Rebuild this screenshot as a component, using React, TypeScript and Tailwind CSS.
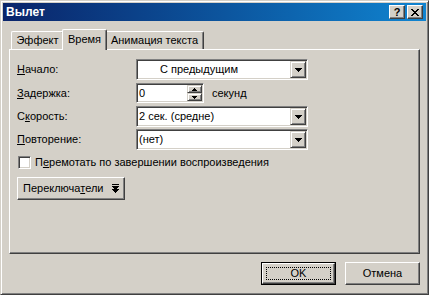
import React from "react";

const font = "font-['Liberation_Sans',Arial,sans-serif]";
const raised =
  "border border-t-white border-l-white border-r-[#404040] border-b-[#404040] shadow-[inset_-1px_-1px_#808080]";
const raisedSoft =
  "border border-t-[#d4d0c8] border-l-[#d4d0c8] border-r-[#404040] border-b-[#404040] shadow-[inset_1px_1px_#ffffff,inset_-1px_-1px_#808080]";
const sunken =
  "border border-t-[#808080] border-l-[#808080] border-r-white border-b-white shadow-[inset_1px_1px_#404040,inset_-1px_-1px_#d4d0c8]";

function DownArrow() {
  return (
    <svg width="7" height="4" viewBox="0 0 7 4" shapeRendering="crispEdges">
      <rect x="0" y="0" width="7" height="1" fill="#000" />
      <rect x="1" y="1" width="5" height="1" fill="#000" />
      <rect x="2" y="2" width="3" height="1" fill="#000" />
      <rect x="3" y="3" width="1" height="1" fill="#000" />
    </svg>
  );
}

function SpinArrow({ up }: { up?: boolean }) {
  return (
    <svg width="5" height="3" viewBox="0 0 5 3" shapeRendering="crispEdges">
      {up ? (
        <>
          <rect x="2" y="0" width="1" height="1" fill="#000" />
          <rect x="1" y="1" width="3" height="1" fill="#000" />
          <rect x="0" y="2" width="5" height="1" fill="#000" />
        </>
      ) : (
        <>
          <rect x="0" y="0" width="5" height="1" fill="#000" />
          <rect x="1" y="1" width="3" height="1" fill="#000" />
          <rect x="2" y="2" width="1" height="1" fill="#000" />
        </>
      )}
    </svg>
  );
}

function Combo({ value, indent }: { value: string; indent?: boolean }) {
  return (
    <div className={`${sunken} w-[172px] h-[21px] bg-white flex items-stretch p-[1px]`}>
      <div className={`flex-1 flex items-center text-[11px] ${indent ? "pl-[22px]" : "pl-[1px]"}`}>
        {value}
      </div>
      <div className={`${raisedSoft} w-[16px] bg-[#d4d0c8] flex items-center justify-center`}>
        <DownArrow />
      </div>
    </div>
  );
}

function Row({ label, children }: { label: React.ReactNode; children: React.ReactNode }) {
  return (
    <div className="flex items-center">
      <div className="w-[119px] text-[11px]">{label}</div>
      {children}
    </div>
  );
}

export default function App() {
  return (
    <div
      className={`${font} w-[429px] h-[295px] bg-[#d4d0c8] text-black border border-t-[#d4d0c8] border-l-[#d4d0c8] border-r-[#404040] border-b-[#404040] shadow-[inset_1px_1px_#ffffff,inset_-1px_-1px_#808080] p-[2px] flex flex-col overflow-hidden`}
    >
      {/* Title bar */}
      <div className="h-[18px] bg-linear-to-r from-[#0a246a] to-[#1084d0] flex items-center justify-between pl-[3px] pr-[3px]">
        <span className="text-white font-bold text-[12px] leading-none">Вылет</span>
        <div className="flex gap-[2px]">
          <div className={`${raised} bg-[#d4d0c8] w-[16px] h-[14px] flex items-center justify-center text-[11px] font-bold leading-none`}>
            ?
          </div>
          <div className={`${raised} bg-[#d4d0c8] w-[16px] h-[14px] flex items-center justify-center`}>
            <svg width="8" height="7" viewBox="0 0 8 7" shapeRendering="crispEdges">
              <path d="M0 0h2v1h-2zM6 0h2v1h-2zM1 1h2v1h-2zM5 1h2v1h-2zM2 2h4v1h-4zM3 3h2v1h-2zM2 4h4v1h-4zM1 5h2v1h-2zM5 5h2v1h-2zM0 6h2v1h-2zM6 6h2v1h-2z" fill="#000" />
            </svg>
          </div>
        </div>
      </div>

      <div className="pl-[6px] flex flex-col">
        {/* Tabs */}
        <div className="mt-[8px] ml-[2px] flex items-end text-[11px]">
          <div className="w-[53px] h-[18px] border-t border-l border-white border-r border-r-[#404040] shadow-[inset_-1px_0_#808080] rounded-tl-[2px] rounded-tr-[2px] flex items-center justify-center">
            Эффект
          </div>
          <div className="relative z-10 -mx-[2px] mb-[-1px] w-[45px] h-[21px] bg-[#d4d0c8] border-t border-l border-white border-r border-r-[#404040] shadow-[inset_-1px_0_#808080] rounded-tl-[2px] rounded-tr-[2px] flex items-center justify-center pb-[2px]">
            Время
          </div>
          <div className="w-[99px] h-[18px] border-t border-l border-white border-r border-r-[#404040] shadow-[inset_-1px_0_#808080] rounded-tl-[2px] rounded-tr-[2px] flex items-center justify-center">
            Анимация текста
          </div>
        </div>

        {/* Panel */}
        <div className={`${raised} w-[411px] h-[205px] flex flex-col pl-[7px] pt-[9px]`}>
          <Row label={<><u>Н</u>ачало:</>}>
            <Combo value="С предыдущим" indent />
          </Row>
          <div className="mt-[3px]">
            <Row label={<><u>З</u>адержка:</>}>
              <div className={`${sunken} w-[68px] h-[20px] bg-white flex items-stretch p-[1px]`}>
                <div className="flex-1 flex items-center text-[11px] pl-[1px]">0</div>
                <div className="w-[15px] flex flex-col">
                  <div className={`${raisedSoft} flex-1 bg-[#d4d0c8] flex items-center justify-center`}>
                    <SpinArrow up />
                  </div>
                  <div className={`${raisedSoft} flex-1 bg-[#d4d0c8] flex items-center justify-center`}>
                    <SpinArrow />
                  </div>
                </div>
              </div>
              <span className="ml-[8px] text-[11px]">секунд</span>
            </Row>
          </div>
          <div className="mt-[3px]">
            <Row label={<>С<u>к</u>орость:</>}>
              <Combo value="2 сек. (средне)" />
            </Row>
          </div>
          <div className="mt-[2px]">
            <Row label={<><u>П</u>овторение:</>}>
              <Combo value="(нет)" />
            </Row>
          </div>

          <div className="mt-[4px] flex items-center">
            <div className={`${sunken} ml-[1px] w-[13px] h-[13px] bg-white`} />
            <span className="ml-[4px] text-[11px]">
              П<u>е</u>ремотать по завершении воспроизведения
            </span>
          </div>

          <div className={`${raised} mt-[6px] w-[108px] h-[23px] flex items-center justify-between pl-[5px] pr-[5px] text-[11px]`}>
            <span>
              Переключа<u>т</u>ели
            </span>
            <svg width="7" height="9" viewBox="0 0 7 9" shapeRendering="crispEdges">
              <rect x="0" y="0" width="7" height="1" fill="#000" />
              <path d="M0 2h7v1h-7zM1 3h5v1h-5zM2 4h3v1h-3zM3 5h1v1h-1z" fill="#000" />
              <path d="M0 5h3v1h-3zM4 5h3v1h-3zM1 6h5v1h-5zM2 7h3v1h-3zM3 8h1v1h-1z" fill="#000" />
            </svg>
          </div>
        </div>

        {/* Dialog buttons */}
        <div className="mt-[8px] w-[411px] flex justify-end gap-[9px] text-[11px]">
          <div className="w-[75px] h-[23px] border border-black">
            <div className={`${raised} w-full h-full p-[3px]`}>
              <div className="w-full h-full border border-dotted border-black flex items-center justify-center">
                OK
              </div>
            </div>
          </div>
          <div className={`${raised} w-[75px] h-[23px] flex items-center justify-center`}>
            Отмена
          </div>
        </div>
      </div>
    </div>
  );
}
